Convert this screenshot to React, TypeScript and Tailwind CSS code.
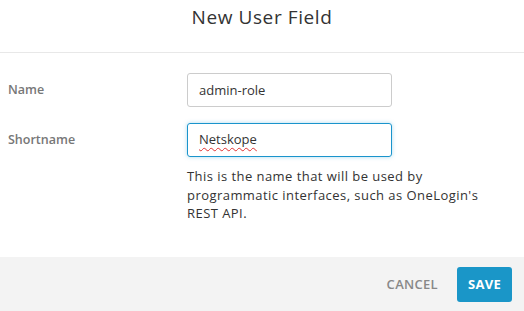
import React from "react";

export default function App() {
  return (
    <div
      className="w-[524px] h-[311px] bg-white flex flex-col overflow-hidden text-[#333]"
      style={{ fontFamily: '"Open Sans", "Liberation Sans", sans-serif' }}
    >
      <div className="h-[53px] flex items-start justify-center pt-[5px] border-b border-[#e8e8e8]">
        <h1 className="text-[19px] leading-[24px] text-[#333] tracking-[0.6px]">New User Field</h1>
      </div>
      <div className="flex-1 flex flex-col pt-[20px]">
        <div className="flex items-center h-[34px]">
          <label className="w-[187px] pl-[8px] text-[12.5px] font-semibold text-[#777]">Name</label>
          <input
            readOnly
            value="admin-role"
            className="w-[205px] h-[34px] border border-[#cccccc] rounded-[3px] px-[11px] text-[13px] text-[#333] outline-none"
          />
        </div>
        <div className="flex items-start mt-[16px]">
          <label className="w-[187px] pl-[8px] text-[12.5px] font-semibold text-[#777] h-[34px] flex items-center">Shortname</label>
          <div className="flex flex-col">
            <div className="w-[205px] h-[34px] border border-[#1a94cc] rounded-[3px] px-[11px] text-[13px] text-[#333] flex items-center shadow-[0_0_4px_rgba(26,148,204,0.35)]">
              <span className="underline decoration-wavy decoration-[#e03030] decoration-[1px] underline-offset-[3px]">Netskope</span>
            </div>
            <p className="mt-[10px] w-[318px] text-[13px] leading-[18.5px] tracking-[0.45px] text-[#333]">
              This is the name that will be used by programmatic interfaces, such as OneLogin's REST API.
            </p>
          </div>
        </div>
      </div>
      <div className="h-[54px] bg-[#f3f3f3] flex items-center justify-end pr-[12px] pt-[1px]">
        <button className="text-[13px] font-semibold text-[#888] tracking-[0.3px] mr-[19px]">CANCEL</button>
        <button className="w-[55px] h-[35px] bg-[#1a96c8] rounded-[3px] text-white text-[13px] font-bold tracking-[0.3px]">SAVE</button>
      </div>
    </div>
  );
}
